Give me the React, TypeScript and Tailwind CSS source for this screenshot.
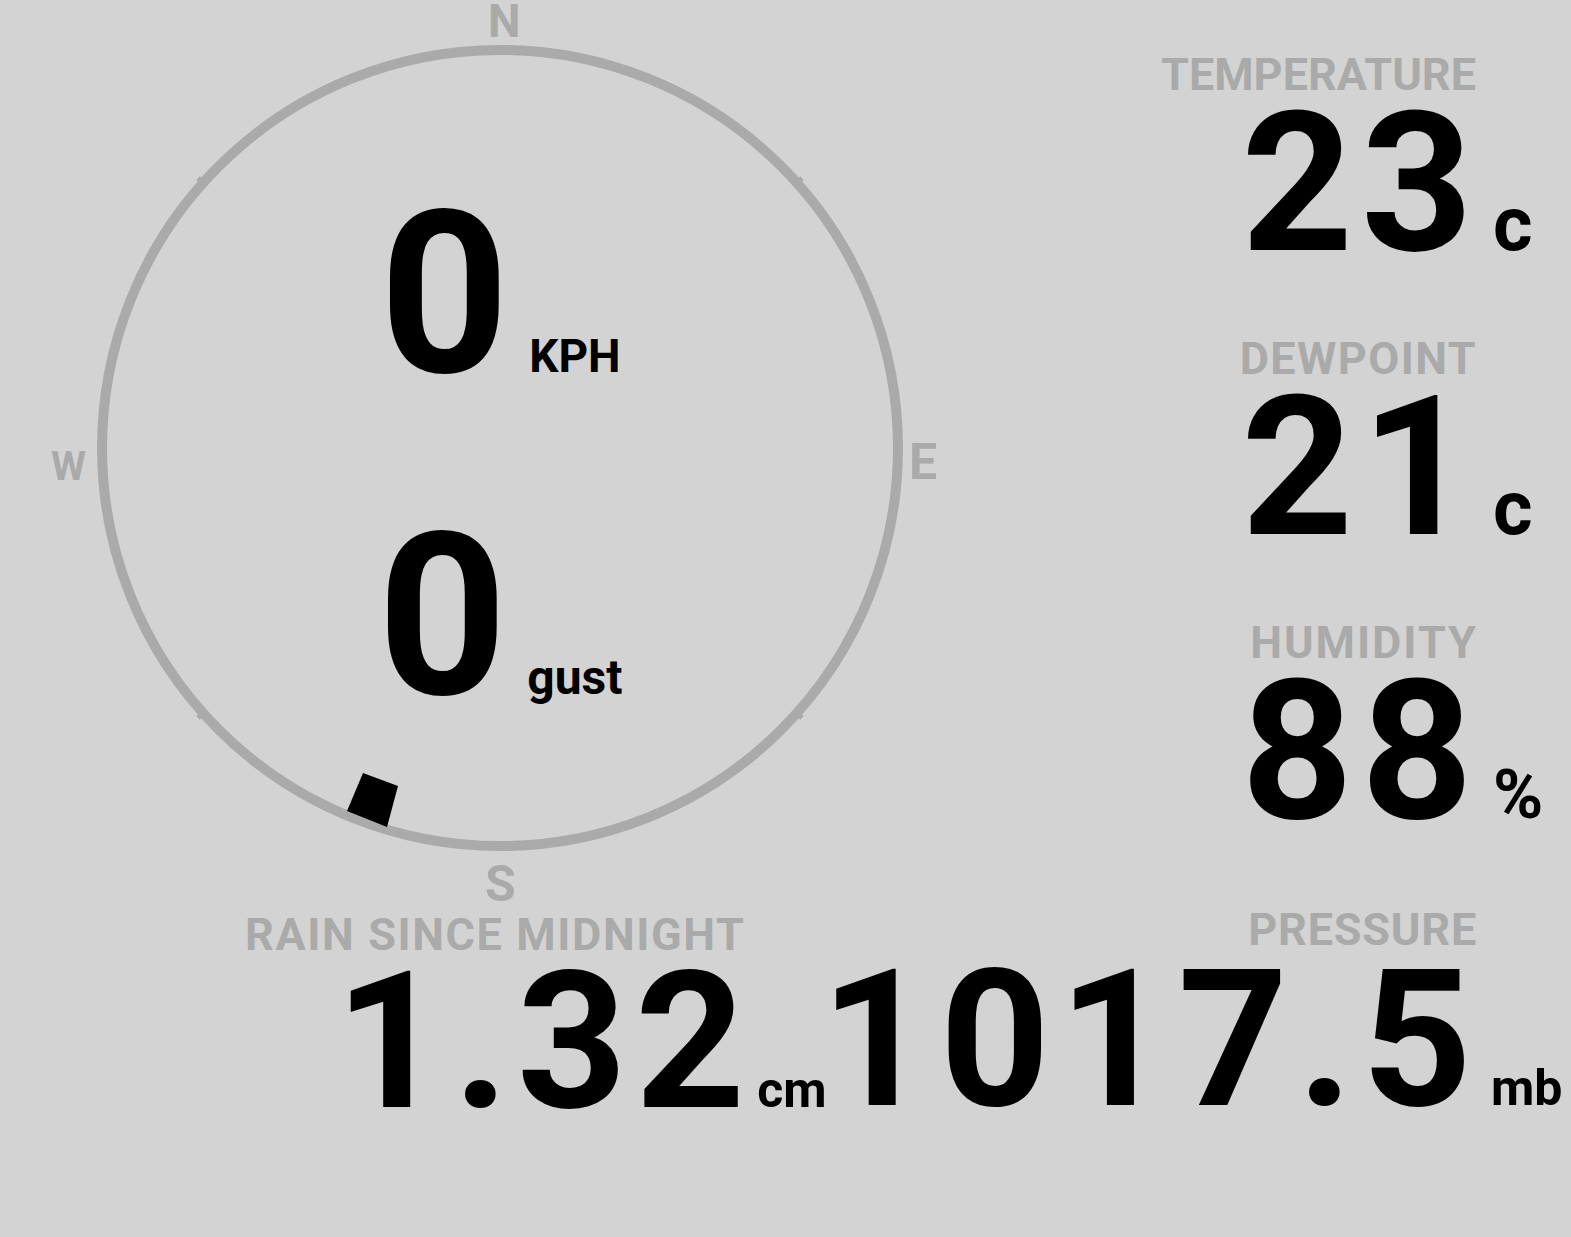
const ticks = [
    [200, 180], [800, 180], [200, 716], [800, 716],
];

function Reading({label, labelClass, value, unit, unitClass}: {
    label: string;
    labelClass: string;
    value: string;
    unit: string;
    unitClass: string
}) {
    return (
        <div className="h-[284px]">
            <div className={labelClass}>{label}</div>
            <div className="mt-3 flex items-baseline justify-end">
                <span className="text-[195px] leading-[150px] tracking-[8px]">{value}</span>
                <span className={unitClass}>{unit}</span>
            </div>
        </div>
    );
}

function Compass() {
    return (
        <div className="relative h-[904px] w-[1000px] shrink-0">
            <svg className="absolute left-0 top-0" width="1000" height="904" viewBox="0 0 1000 904">
                <circle cx="500" cy="448" r="398" fill="none" stroke="#aaaaaa" strokeWidth="10"/>
                {ticks.map(([x, y]) => {
                    const dx = x - 500;
                    const dy = y - 448;
                    const len = Math.hypot(dx, dy);
                    const ux = dx / len;
                    const uy = dy / len;
                    return (
                        <line key={`${x}-${y}`}
                              x1={500 + ux * 394} y1={448 + uy * 394}
                              x2={500 + ux * 405} y2={448 + uy * 405}
                              stroke="#aaaaaa" strokeWidth="5"/>
                    );
                })}
                <polygon points="363,773 398,786 387,827 347,811" fill="#000000"/>
            </svg>

            <span className="absolute left-[488px] top-0 text-[46px] leading-[42px] text-[#aaaaaa]">N</span>
            <span className="absolute left-[909px] top-[437px] text-[50px] leading-none text-[#aaaaaa]">E</span>
            <span className="absolute left-[485px] top-[859px] text-[50px] leading-none text-[#aaaaaa]">S</span>
            <span className="absolute left-[51px] top-[447px] text-[40px] leading-none text-[#aaaaaa]">W</span>

            <div className="relative flex flex-col items-center pt-[205px]">
                <div className="flex items-baseline">
                    <span className="text-[226px] leading-[180px]">0</span>
                    <span className="ml-[20px] text-[46px] leading-none">KPH</span>
                </div>
                <div className="mt-[142px] flex items-baseline">
                    <span className="text-[226px] leading-[180px]">0</span>
                    <span className="ml-[20px] text-[48px] leading-none">gust</span>
                </div>
            </div>
        </div>
    );
}

export default function App() {
    return (
        <div className="min-h-screen w-full overflow-hidden bg-[#d3d3d3] font-['Roboto',sans-serif] font-bold text-black">
            <div className="flex">
                <Compass/>
                <div className="flex-1 pt-[52px]">
                    <Reading label="TEMPERATURE" value="23" unit="c"
                             labelClass="pr-[95px] text-right text-[45px] leading-none text-[#aaaaaa]"
                             unitClass="w-[90px] pl-[12px] text-[76px] leading-none"/>
                    <Reading label="DEWPOINT" value="21" unit="c"
                             labelClass="pr-[94px] text-right text-[45px] leading-none tracking-[1.4px] text-[#aaaaaa]"
                             unitClass="w-[90px] pl-[12px] text-[76px] leading-none"/>
                    <Reading label="HUMIDITY" value="88" unit="%"
                             labelClass="pr-[93px] text-right text-[45px] leading-none tracking-[2px] text-[#aaaaaa]"
                             unitClass="w-[90px] pl-[12px] text-[68px] leading-none"/>
                </div>
            </div>

            <div className="flex">
                <div className="w-[820px] shrink-0 pt-[8px]">
                    <div className="pl-[245px] text-[45px] leading-none tracking-[1.6px] text-[#aaaaaa]">RAIN SINCE MIDNIGHT</div>
                    <div className="mt-[10px] flex items-baseline pl-[335px]">
                        <span className="text-[192px] leading-[150px] tracking-[8px]">1.32</span>
                        <span className="ml-[4px] text-[50px] leading-none">cm</span>
                    </div>
                </div>
                <div className="flex-1 pt-[3px]">
                    <div className="pr-[94px] text-right text-[45px] leading-none tracking-[0.8px] text-[#aaaaaa]">PRESSURE</div>
                    <div className="mt-[13px] flex items-baseline justify-end">
                        <span className="text-[192px] leading-[150px] tracking-[9px]">1017.5</span>
                        <span className="w-[90px] pl-[10px] text-[50px] leading-none">mb</span>
                    </div>
                </div>
            </div>
        </div>
    );
}
